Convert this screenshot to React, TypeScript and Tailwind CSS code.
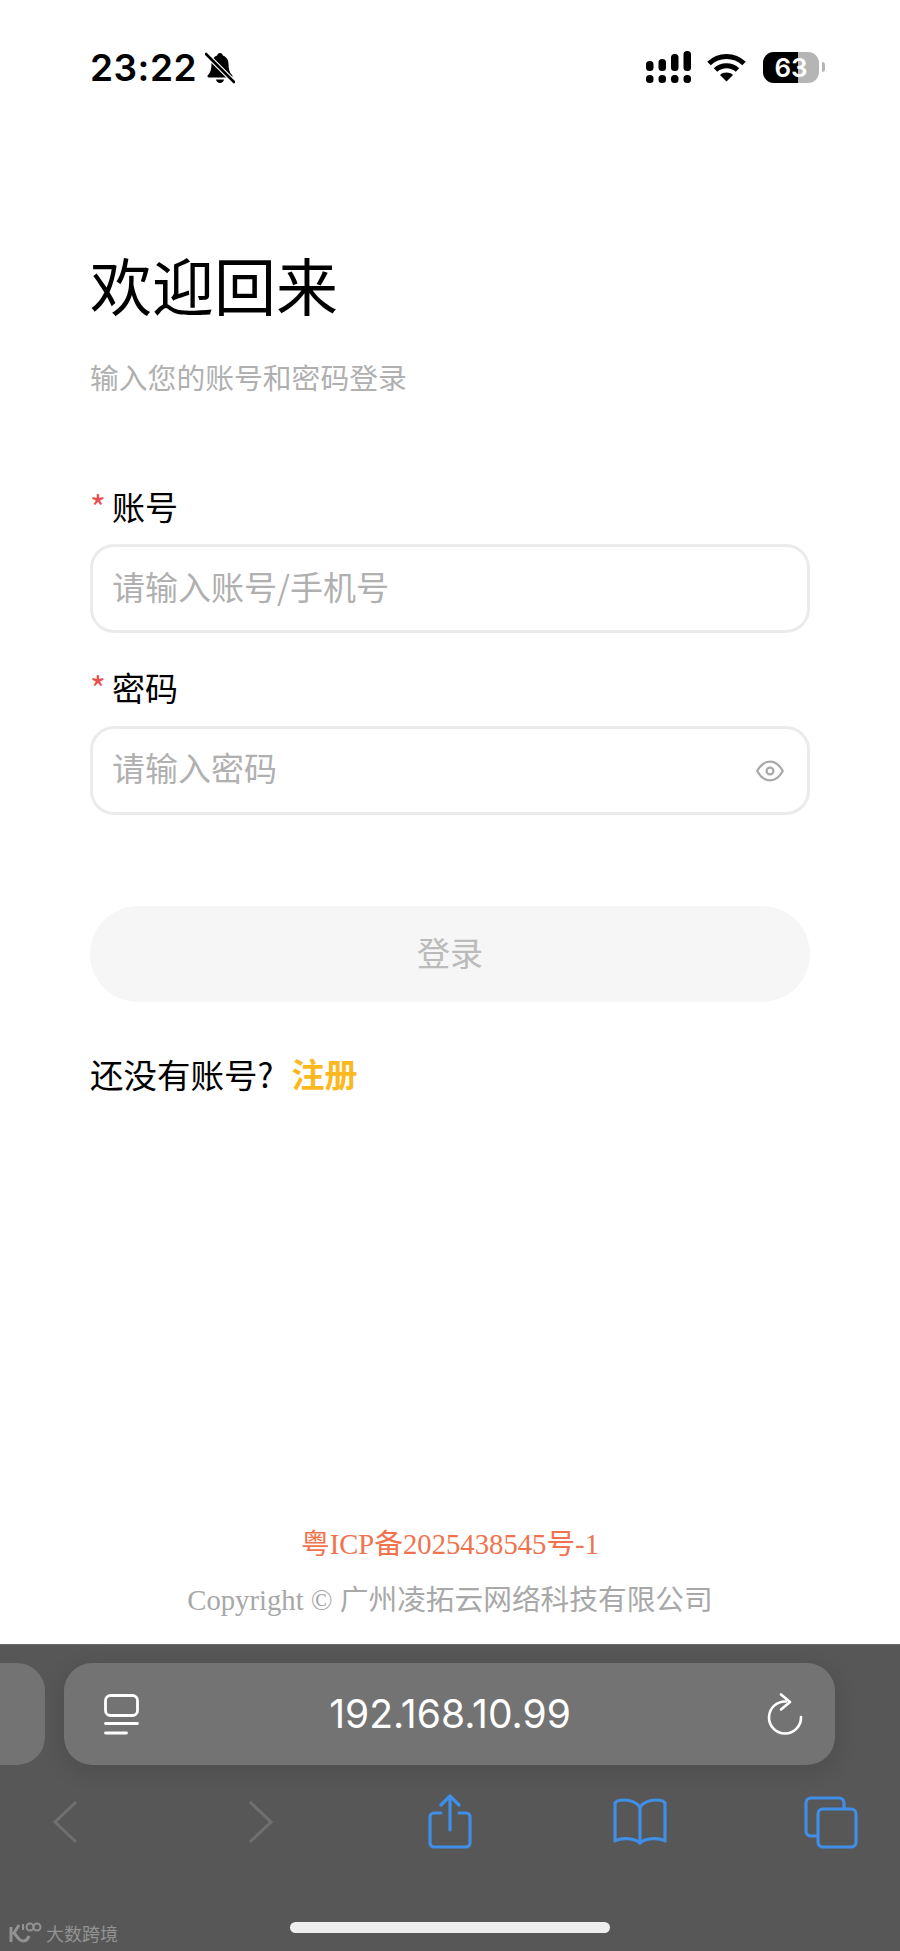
import React from 'react';

const cjk = 'font-["Noto_Sans_CJK_SC","Noto_Sans",sans-serif]';

const StatusBar: React.FC = () => {
  return (
    <div className="h-[142px] flex items-start justify-between pl-[90px] pr-[75px] pt-[52px]">
      <div className="flex items-center h-[32px]">
        <span className='font-["Inter",sans-serif] font-semibold text-[37px] leading-[32px] text-black tracking-[0.5px]'>23:22</span>
        <svg className="ml-[8px]" width="30" height="32" viewBox="0 0 30 32">
          <path d="M15 1c-1.6 0-2.6 1-2.8 2.4C8.6 4.600 6.500 7.800 6.500 12c0 5-1 8.500-3.500 11-1 1-.5 2.500 1 2.500h22c1.500 0 2-1.500 1-2.500-2.500-2.500-3.500-6-3.500-11 0-4.200-2.100-7.400-5.700-8.600C17.600 2 16.600 1 15 1z" fill="#000" />
          <path d="M11 27.500c.4 2.200 2 3.500 4 3.500s3.600-1.300 4-3.500z" fill="#000" />
          <path d="M1 2l28 28" stroke="#fff" strokeWidth="5" />
          <path d="M1 2l28 28" stroke="#000" strokeWidth="2.600" strokeLinecap="round" />
        </svg>
      </div>
      <div className="flex items-center h-[32px] mt-[-1px]">
        <svg width="45" height="32" viewBox="0 0 45 32" fill="#000">
          <rect x="0" y="10" width="7.500" height="10" rx="3.500" />
          <rect x="12.500" y="8" width="7.500" height="12" rx="3.500" />
          <rect x="25" y="3" width="7.500" height="17" rx="3.500" />
          <rect x="37.500" y="0" width="7.500" height="20" rx="3.500" />
          <rect x="0" y="24" width="7.500" height="8" rx="3.500" />
          <rect x="12.500" y="24" width="7.500" height="8" rx="3.500" />
          <rect x="25" y="24" width="7.500" height="8" rx="3.500" />
          <rect x="37.500" y="24" width="7.500" height="8" rx="3.500" />
        </svg>
        <svg className="ml-[16px]" width="39" height="29" viewBox="0 0 39 29" fill="none" stroke="#000" strokeWidth="5">
          <path d="M2 10.500C11.500 1 27.500 1 37 10.500" />
          <path d="M8.500 17c6-5.800 16-5.800 22 0" />
          <path d="M19.500 28.500l-6.500-6.500c3.600-3.200 9.400-3.200 13 0z" fill="#000" stroke="none" />
        </svg>
        <div className="ml-[17px] relative w-[56px] h-[31px] rounded-[11px] overflow-hidden bg-[#b5b5b5] flex items-center justify-center">
          <div className="absolute left-0 top-0 bottom-0 w-[35px] bg-black" />
          <span className='relative font-["Inter",sans-serif] font-semibold text-[26px] leading-[31px] text-white'>63</span>
        </div>
        <div className="ml-[3px] w-[3px] h-[10px] rounded-r-full bg-[#b5b5b5]" />
      </div>
    </div>
  );
};

const FieldLabel: React.FC<{ text: string }> = ({ text }) => {
  return (
    <div className="flex items-center h-[44px]">
      <span className={`${cjk} text-[#e85050] text-[34px] leading-[44px] w-[22px] mt-[2px]`}>*</span>
      <span className={`${cjk} text-black text-[33px] leading-[44px]`}>{text}</span>
    </div>
  );
};

const LoginForm: React.FC = () => {
  return (
    <div className="px-[90px]">
      <h1 className={`${cjk} text-[62px] leading-[72px] font-normal text-black mt-[106px]`}>欢迎回来</h1>
      <p className={`${cjk} text-[28.8px] leading-[40px] text-[#b0b0b0] mt-[37px]`}>输入您的账号和密码登录</p>

      <div className="mt-[87px]">
        <FieldLabel text="账号" />
      </div>
      <input
        readOnly
        placeholder="请输入账号/手机号"
        className={`${cjk} mt-[16px] block w-full h-[89px] rounded-[24px] border-[3px] border-[#ebebeb] bg-white pl-[19px] pr-[20px] pb-[5px] text-[33px] outline-none placeholder:text-[#b0b0b0]`}
      />

      <div className="mt-[32px]">
        <FieldLabel text="密码" />
      </div>
      <div className="mt-[17px] flex items-center h-[89px] rounded-[24px] border-[3px] border-[#ebebeb] bg-white pl-[19px] pr-[23px]">
        <input
          readOnly
          placeholder="请输入密码"
          className={`${cjk} flex-1 min-w-0 pb-[5px] text-[33px] outline-none placeholder:text-[#b0b0b0]`}
        />
        <svg width="28" height="22" viewBox="0 0 28 22" fill="none" stroke="#a9a9a9" strokeWidth="2.200">
          <path d="M1.200 11C4.500 5 9 1.700 14 1.700S23.500 5 26.800 11C23.500 17 19 20.300 14 20.300S4.500 17 1.200 11z" strokeLinejoin="round" />
          <circle cx="14" cy="11" r="3.400" />
        </svg>
      </div>

      <button className={`${cjk} mt-[91px] block w-full h-[96px] rounded-full bg-[#f6f6f6] pb-[2px] text-[33px] text-[#bbbbbb]`}>登录</button>

      <div className="mt-[48px] flex items-center h-[48px]">
        <span className={`${cjk} text-[33.5px] text-black`}>还没有账号?</span>
        <span className={`${cjk} text-[33px] font-bold text-[#fbb91f] ml-[18px]`}>注册</span>
      </div>
    </div>
  );
};

const Footer: React.FC = () => {
  return (
    <div className='mt-auto pb-[24px] text-center font-["Liberation_Serif","Noto_Sans_CJK_SC",serif]'>
      <div className="text-[28.7px] leading-[40px] text-[#f0734e]">粤ICP备2025438545号-1</div>
      <div className="mt-[16px] text-[28.7px] leading-[40px] text-[#a8a8a8]">Copyright © 广州凌拓云网络科技有限公司</div>
    </div>
  );
};

const ToolbarIcons: React.FC = () => {
  return (
    <div className="mt-[27px] ml-[15px] flex items-center h-[60px]">
      <div className="w-[100px] shrink-0 flex justify-center">
        <svg width="26" height="44" viewBox="0 0 26 44" fill="none" stroke="#707070" strokeWidth="3">
          <path d="M24 2L3 22l21 20" />
        </svg>
      </div>
      <div className="ml-[96px] w-[100px] shrink-0 flex justify-center">
        <svg width="26" height="44" viewBox="0 0 26 44" fill="none" stroke="#707070" strokeWidth="3">
          <path d="M2 2l21 20L2 42" />
        </svg>
      </div>
      <div className="ml-[89px] w-[100px] shrink-0 flex justify-center">
        <svg width="46" height="56" viewBox="0 0 46 56" fill="none" stroke="#3f8ee8" strokeWidth="3.200" strokeLinecap="round" strokeLinejoin="round">
          <path d="M14 19H7a4 4 0 0 0-4 4v26a4 4 0 0 0 4 4h32a4 4 0 0 0 4-4V23a4 4 0 0 0-4-4h-7" />
          <path d="M23 36V3M14 11l9-9 9 9" />
        </svg>
      </div>
      <div className="ml-[90px] w-[100px] shrink-0 flex justify-center">
        <svg width="56" height="48" viewBox="0 0 56 48" fill="none" stroke="#3f8ee8" strokeWidth="3.200" strokeLinecap="round" strokeLinejoin="round">
          <path d="M28 9C24 4 18 2 12 2 8 2 4 3 3 5v38c5-3 18-4 25 2 7-6 20-5 25-2V5c-1-2-5-3-9-3-6 0-12 2-16 7z" />
          <path d="M28 9v36" />
        </svg>
      </div>
      <div className="ml-[91px] w-[100px] shrink-0 flex justify-center">
        <svg width="54" height="53" viewBox="0 0 54 53" fill="none" stroke="#3f8ee8" strokeWidth="3.200" strokeLinejoin="round">
          <path d="M13 40H7a5 5 0 0 1-5-5V7a5 5 0 0 1 5-5h28a5 5 0 0 1 5 5v5" />
          <rect x="14" y="13" width="38" height="38" rx="5" />
        </svg>
      </div>
    </div>
  );
};

const SafariBar: React.FC = () => {
  return (
    <div className="relative h-[307px] bg-[#575757] border-t border-t-[#6a6a6a] overflow-hidden">
      <div className="mt-[18px] flex gap-[19px]">
        <div className="w-[45px] h-[102px] rounded-r-[28px] bg-[#737373]" />
        <div className="w-[771px] h-[102px] rounded-[28px] bg-[#737373] shadow-[0_6px_24px_rgba(0,0,0,0.12)] flex items-center justify-between pl-[40px] pr-[32px]">
          <svg width="35" height="41" viewBox="0 0 35 41" fill="none" stroke="#fff" strokeWidth="2.800" strokeLinecap="round">
            <rect x="1.500" y="1.500" width="32" height="20" rx="5" />
            <path d="M1.500 29.500h32M1.500 39h21" />
          </svg>
          <span className='mr-[6px] font-["Inter",sans-serif] text-[39px] leading-[44px] text-white'>192.168.10.99</span>
          <svg width="36" height="42" viewBox="0 0 36 42" fill="none" stroke="#fff" strokeWidth="2.600" strokeLinecap="round" strokeLinejoin="round">
            <path d="M19 8.500A16 16 0 1 0 34 24" />
            <path d="M14 1.500l9 7.500-9 7.500" />
          </svg>
        </div>
      </div>
      <ToolbarIcons />
      <div className="absolute left-[290px] top-[277px] w-[320px] h-[11px] rounded-full bg-[#eeeeee]" />
      <div className="absolute left-[8px] top-[276px] flex items-center opacity-90">
        <svg width="34" height="24" viewBox="0 0 34 24" fill="none" stroke="#9a9a9a" strokeWidth="2">
          <path d="M3 6v15M11 4L6 12l5 6c3 3 8 3 10-3" strokeWidth="3" />
          <path d="M15 3v6" />
          <circle cx="22" cy="6" r="3.500" />
          <circle cx="29" cy="6" r="3.500" />
        </svg>
        <span className={`${cjk} ml-[4px] text-[18px] leading-[24px] text-[#9a9a9a]`}>大数跨境</span>
      </div>
    </div>
  );
};

const App: React.FC = () => {
  return (
    <div className="w-[900px] h-[1951px] flex flex-col bg-white overflow-hidden">
      <div className="h-[1644px] flex flex-col">
        <StatusBar />
        <LoginForm />
        <Footer />
      </div>
      <SafariBar />
    </div>
  );
};

export default App;
